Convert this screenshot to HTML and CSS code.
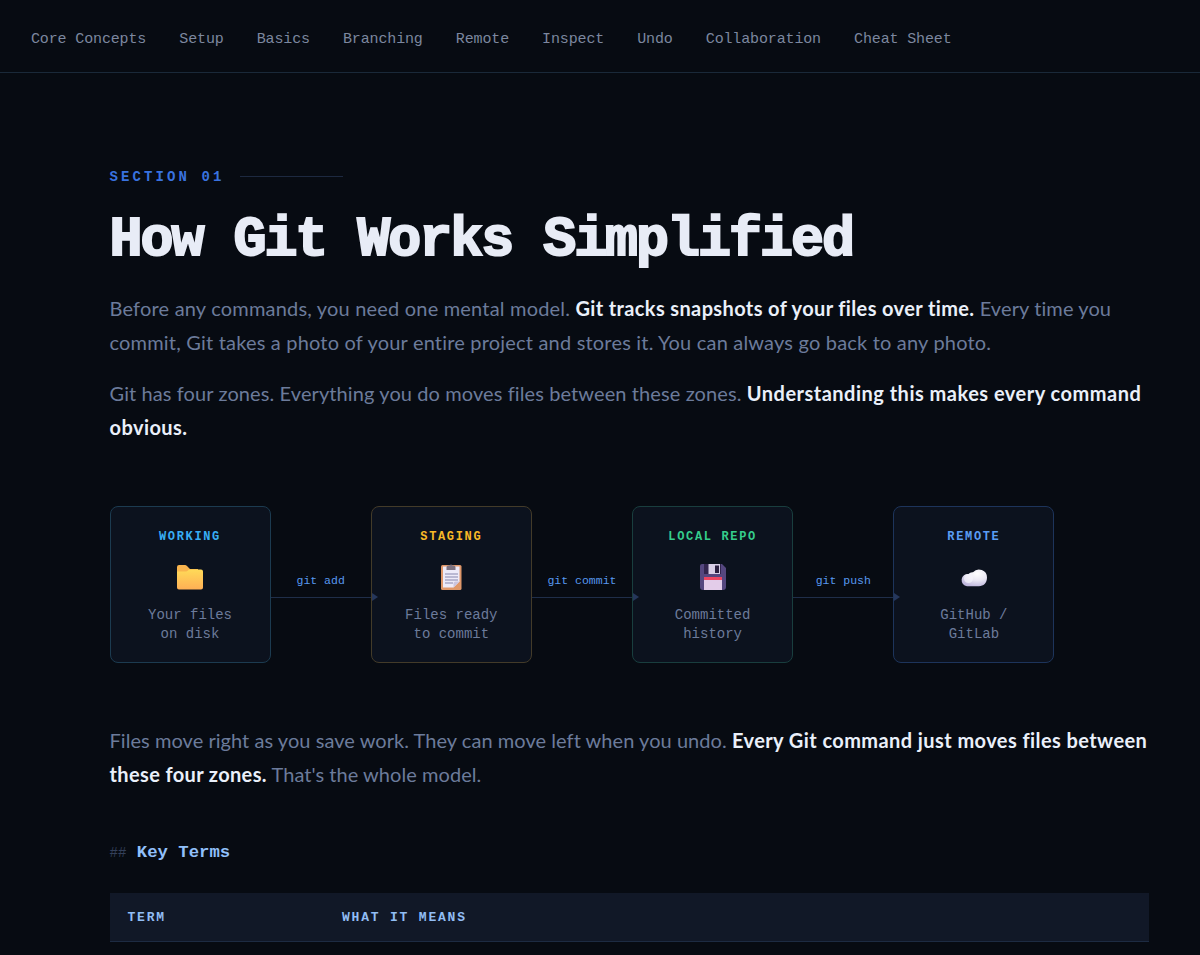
FILE: index.html
```html
<!DOCTYPE html>
<html lang="en">
<head>
<meta charset="utf-8">
<title>How Git Works Simplified</title>
<link rel="stylesheet" href="styles.css">
</head>
<body>
<nav class="nav">
<a>Core Concepts</a><a>Setup</a><a>Basics</a><a>Branching</a><a>Remote</a><a>Inspect</a><a>Undo</a><a>Collaboration</a><a>Cheat Sheet</a>
</nav>
<main class="main">
<div class="eyebrow"><span>SECTION 01</span><i class="rule"></i></div>
<h1 class="title">How Git Works Simplified</h1>
<p class="copy"><span>Before any commands, you need one mental model. </span><strong class="s1">Git tracks snapshots of your files over time.</strong><span class="s3"> Every time you</span><br><span class="s2">commit, Git takes a photo of your entire project and stores it. You can always go back to any photo.</span></p>
<p class="copy"><span class="s3">Git has four zones. Everything you do moves files between these zones. </span><strong class="s4">Understanding this makes every command</strong><br><strong>obvious.</strong></p>
<div class="flow">
<section class="zone working"><h2>WORKING</h2>
<svg class="icon" viewBox="0 0 32 32"><defs><linearGradient id="fold" x2="0" y2="1"><stop stop-color="#ffda58"/><stop offset="1" stop-color="#ffaf55"/></linearGradient></defs><path d="M3 6q0-2 2-2h6q1 0 2 1l3 3h8v17H3z" fill="#f9b44e"/><path d="M3 10.500h9q1 0 2-1l1-1h12q2 0 2 2v16q0 2-2 2H5q-2 0-2-2z" fill="url(#fold)"/></svg>
<p>Your files<br>on disk</p></section>
<div class="link"><span>git add</span></div>
<section class="zone staging"><h2>STAGING</h2>
<svg class="icon" viewBox="0 0 32 32"><rect x="6" y="4" width="20.500" height="25" rx="1.5" fill="#df976a"/><path d="M8 5.500h16.500v15l-6 6H8z" fill="#edeaf9"/><path d="M18.500 26.500v-4q0-2 2-2h4z" fill="#cbc5e1"/><path d="M11.500 9V6q0-1.500 2-1.500h1q1.500-2 3 0h1q2 0 2 1.500v3z" fill="#7c7180"/><path d="M10 13h13M10 16h13M10 19h13M10 22h8" stroke="#8785ad" stroke-width="1.100"/></svg>
<p>Files ready<br>to commit</p></section>
<div class="link"><span>git commit</span></div>
<section class="zone local"><h2>LOCAL REPO</h2>
<svg class="icon" viewBox="0 0 32 32"><path d="M5 3h20l4 4v19q0 3-3 3H6q-3 0-3-3V5q0-2 2-2z" fill="#55477f"/><path d="M7 3h17v10H7z" fill="#32254e"/><path d="M11.500 3H23v10H11.500z" fill="#d8cfe7"/><rect x="18" y="4.500" width="4" height="7.500" fill="#2b2040"/><path d="M7 17h18v12H7z" fill="#e3cce9"/><path d="M7 16h18v3H7z" fill="#ee4662"/></svg>
<p>Committed<br>history</p></section>
<div class="link"><span>git push</span></div>
<section class="zone remote"><h2>REMOTE</h2>
<svg class="icon" viewBox="0 0 32 32"><defs><radialGradient id="cloud" cx=".62" cy=".25" r=".8"><stop stop-color="#fff"/><stop offset=".5" stop-color="#ebe8f4"/><stop offset="1" stop-color="#beb5dc"/></radialGradient></defs><path d="M9 25.200a6 6 0 1 1 1.500-12.200 5 5 0 0 1 4.500-1.800A8 8 0 0 1 29 16.500c0 5.500-3.500 8.700-8 8.700z" fill="url(#cloud)"/><circle cx="10.500" cy="17.500" r="4.500" fill="#f8f6fd" opacity=".65"/></svg>
<p>GitHub /<br>GitLab</p></section>
</div>
<p class="copy"><span class="s5">Files move right as you save work. They can move left when you undo. </span><strong class="s6">Every Git command just moves files between</strong><br><strong class="s7">these four zones.</strong><span class="s5"> That's the whole model.</span></p>
<h3 class="sub"><span>##</span>Key Terms</h3>
<div class="thead"><span>TERM</span><span>WHAT IT MEANS</span></div>
</main>
</body>
</html>
```
FILE: styles.css
```css
* { box-sizing: border-box; }
html { height: 955px; overflow: hidden; background: #070b12; }
body { margin: 0; height: 955px; overflow: hidden; background: #070b12; color: #6c7b9b; font-family: "Liberation Mono", monospace; }
.nav { height: 73px; border-bottom: 1px solid #1a2939; padding: 7px 31px 0; display: flex; align-items: center; gap: 33.1px; font-size: 15px; letter-spacing: -.14px; color: #7c879f; white-space: nowrap; }
.main { padding: 93px 51px 0 109.5px; }
.eyebrow { height: 20px; display: flex; align-items: center; font-size: 14px; font-weight: 700; letter-spacing: 3.1px; color: #3972df; }
.eyebrow span { width: 130.5px; padding-top: 2px; }
.rule { width: 103px; height: 1px; background: #1d2940; }
.title { margin: 17px 0 0; padding-top: 5px; height: 66px; line-height: 66px; font-size: 55px; letter-spacing: -2.03px; font-weight: 700; color: #e8ecf6; -webkit-text-stroke: 2px #e8ecf6; white-space: nowrap; }
.copy { margin: 22px 0 0; font: 400 20px/34px Lato, sans-serif; letter-spacing: .19px; white-space: nowrap; }
.copy + .copy { margin-top: 17px; }
.copy strong { font-weight: 700; letter-spacing: .42px; color: #eaf0fa; }
.copy .s1 { letter-spacing: .37px; }
.copy .s3 { letter-spacing: .1px; }
.copy .s4 { letter-spacing: .49px; }
.copy .s5 { letter-spacing: .05px; }
.copy .s7 { letter-spacing: .36px; }
.flow { display: flex; align-items: stretch; height: 157px; margin-top: 62px; }
.zone { width: 161px; flex: none; border: 1px solid #1c3b50; border-radius: 8px; background: #0c121e; text-align: center; }
.zone h2 { margin: 21px 0 0; font-size: 12px; line-height: 18px; letter-spacing: 1.65px; color: #38aef5; }
.icon { display: block; width: 32px; height: 32px; margin: 15px auto 0; }
.zone p { margin: 13px 0 0; font-size: 14px; line-height: 19px; }
.staging { border-color: #433b29; }
.staging h2 { color: #f8b927; }
.local { border-color: #193e3e; }
.local h2 { color: #35cd8c; }
.remote { border-color: #1d345b; }
.remote h2 { color: #5a9df4; }
.link { position: relative; width: 100.300px; flex: none; padding-top: 66px; text-align: center; font-size: 11.500px; line-height: 18px; color: #5798ef; }
.link::before { content: ""; position: absolute; left: 0; right: 0; top: 91px; height: 1px; background: #1f2e49; }
.link::after { content: ""; position: absolute; z-index: 1; right: -7px; top: 87px; border-left: 6px solid #26375b; border-top: 4px solid transparent; border-bottom: 4px solid transparent; }
.flow + .copy { margin-top: 60px; }
.sub { margin: 50px 0 0; height: 24px; line-height: 24px; font-size: 17.300px; color: #91c0fa; }
.sub span { font-size: 14px; font-weight: 400; color: #34405a; margin-right: 10.500px; }
.thead { margin-top: 28px; height: 49px; padding: 0 18px; display: flex; align-items: center; background: #111827; border-bottom: 1px solid #1d2b42; color: #91bdf4; font-size: 13px; font-weight: 700; letter-spacing: 1.800px; }
.thead span:first-child { width: 214.500px; }
```
